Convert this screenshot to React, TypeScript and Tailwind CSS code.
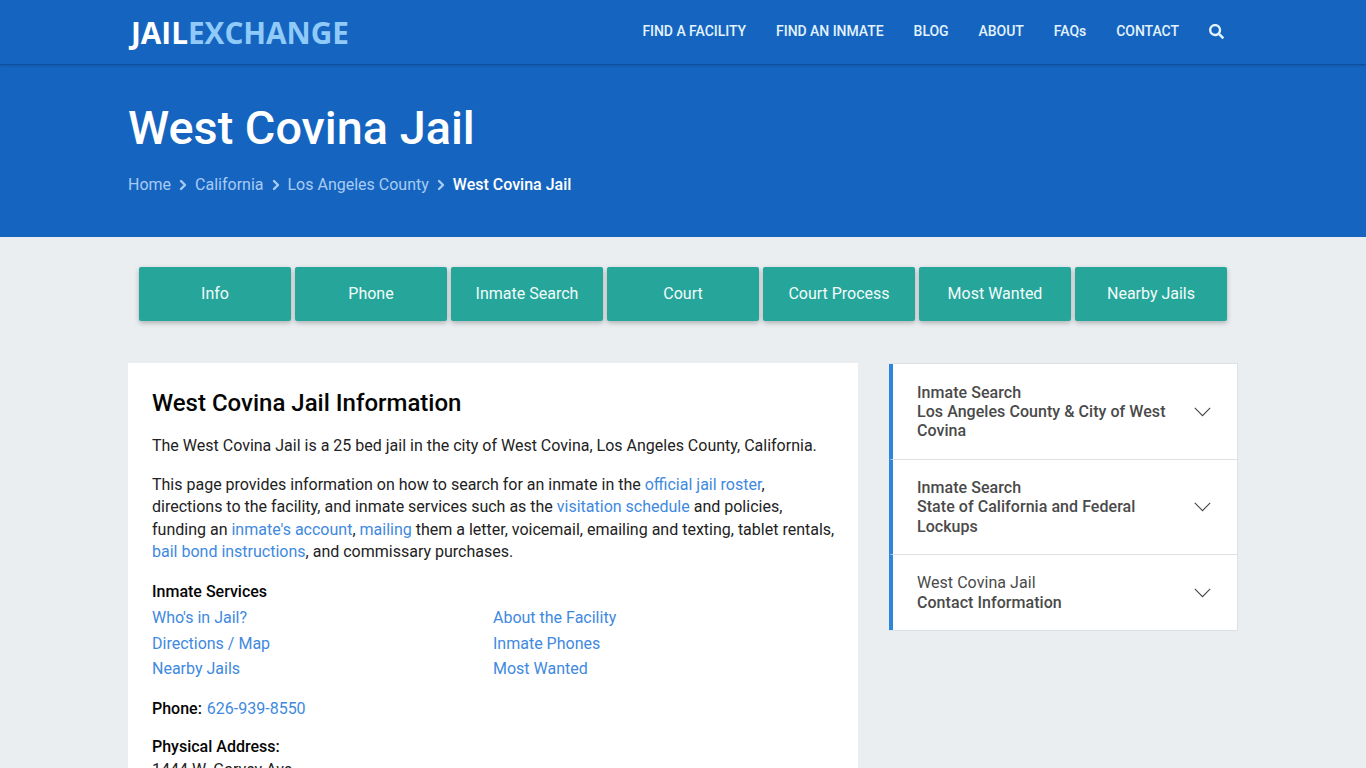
import { ChevronRight } from "lucide-react";

const navItems = [
  "FIND A FACILITY",
  "FIND AN INMATE",
  "BLOG",
  "ABOUT",
  "FAQs",
  "CONTACT",
];

const tabs = [
  "Info",
  "Phone",
  "Inmate Search",
  "Court",
  "Court Process",
  "Most Wanted",
  "Nearby Jails",
];

function Crumb({ label }: { label: string }) {
  return (
    <>
      <a className="text-[#a8cbf3]">{label}</a>
      <ChevronRight size={16} strokeWidth={3.6} className="mx-[4px] text-[#a8cbf3]" />
    </>
  );
}

function Link({ children }: { children: React.ReactNode }) {
  return <a className="text-[#4089e0]">{children}</a>;
}

function SideItem({
  first,
  second,
  third,
  light,
  className,
}: {
  first: string;
  second: string;
  third?: string;
  light?: boolean;
  className: string;
}) {
  return (
    <div className={`flex items-center border-l-4 border-l-[#2d86dc] pl-[24px] pr-[26px] ${className}`}>
      <div className="w-[258px] text-[16px] leading-[19.2px] tracking-[0.05px] text-[#4a4a4a] font-medium">
        <div className={light ? "font-normal" : ""}>{first}</div>
        <div>{second}</div>
        {third && <div>{third}</div>}
      </div>
      <svg viewBox="0 0 17 10" className="ml-auto w-[17px] h-[10px] fill-none stroke-[#444] stroke-[1.1]">
        <path d="M.8.8l7.7 7.8L16.2.8" />
      </svg>
    </div>
  );
}

export default function App() {
  return (
    <div className="h-screen overflow-hidden bg-[#eaeef1] font-['Roboto',sans-serif] text-[16px] text-[#222]">
      {/* HEADER */}
      <header className="h-[65px] bg-[#1565c0] border-b border-[#0f4f9e] shadow-[0_1px_2px_rgba(0,0,0,0.15)] relative">
        <div className="w-[1110px] mx-auto flex items-center h-[64px]">
          <div className="font-['Open_Sans',sans-serif] font-bold text-[29.8px] tracking-[-0.05px] text-white leading-none ml-[3px] mt-[2px]">
            JAIL<span className="text-[#90caf9]">EXCHANGE</span>
          </div>
          <nav className="ml-auto flex items-center gap-[30px] text-[14px] tracking-[-0.04px] font-medium text-[#e3f2fd] mr-[14px] mt-[-2px]">
            {navItems.map((item) => (
              <a key={item}>{item}</a>
            ))}
            <svg viewBox="0 0 512 512" className="w-[15px] h-[15px] fill-[#e3f2fd]">
              <path d="M505 442.7L405.3 343c-4.5-4.5-10.6-7-17-7H372c27.6-35.3 44-79.7 44-128C416 93.1 322.9 0 208 0S0 93.1 0 208s93.1 208 208 208c48.3 0 92.7-16.4 128-44v16.3c0 6.4 2.5 12.5 7 17l99.7 99.7c9.4 9.4 24.6 9.4 33.9 0l28.3-28.3c9.4-9.4 9.4-24.6.1-34zM208 336c-70.7 0-128-57.2-128-128 0-70.7 57.2-128 128-128 70.7 0 128 57.2 128 128 0 70.7-57.2 128-128 128z" />
            </svg>
          </nav>
        </div>
      </header>

      {/* HERO */}
      <section className="h-[172px] bg-[#1565c0]">
        <div className="w-[1110px] mx-auto">
          <h1 className="pt-[33px] text-[46.8px] leading-[60px] font-medium text-white">West Covina Jail</h1>
          <div className="mt-[15px] flex items-center leading-[24px]">
            <Crumb label="Home" />
            <Crumb label="California" />
            <Crumb label="Los Angeles County" />
            <span className="text-white font-medium">West Covina Jail</span>
          </div>
        </div>
      </section>

      {/* TABS */}
      <div className="mt-[30px] flex justify-center gap-[4px]">
        {tabs.map((tab) => (
          <a
            key={tab}
            className="w-[152px] h-[54px] flex items-center justify-center rounded-[2px] bg-[#26a69a] text-[#f2fbfa] shadow-[0_2px_5px_rgba(0,0,0,0.26)]"
          >
            {tab}
          </a>
        ))}
      </div>

      {/* MAIN */}
      <div className="w-[1110px] mx-auto mt-[42px] flex items-start">
        <main className="w-[730px] bg-white pl-[24px] pr-[22px] pt-[25px] pb-[24px] leading-[22.5px] shrink-0">
          <h2 className="text-[24px] leading-[30px] font-medium text-[#050505]">West Covina Jail Information</h2>
          <p className="mt-[17px]">
            The West Covina Jail is a 25 bed jail in the city of West Covina, Los Angeles County, California.
          </p>
          <p className="mt-[16px]">
            This page provides information on how to search for an inmate in the <Link>official jail roster</Link>,
            directions to the facility, and inmate services such as the <Link>visitation schedule</Link> and policies,
            funding an <Link>inmate's account</Link>, <Link>mailing</Link> them a letter, voicemail, emailing and
            texting, tablet rentals, <Link>bail bond instructions</Link>, and commissary purchases.
          </p>
          <div className="mt-[17px] font-medium text-[#050505]">Inmate Services</div>
          <div className="mt-[4px] grid grid-cols-[341px_341px] gap-y-[3px]">
            <Link>Who's in Jail?</Link>
            <Link>About the Facility</Link>
            <Link>Directions / Map</Link>
            <Link>Inmate Phones</Link>
            <Link>Nearby Jails</Link>
            <Link>Most Wanted</Link>
          </div>
          <div className="mt-[17px]">
            <span className="font-medium text-[#050505] mr-[1px]">Phone:</span> <Link>626-939-8550</Link>
          </div>
          <div className="mt-[16px] font-medium text-[#050505]">Physical Address:</div>
          <div>1444 W. Garvey Ave</div>
        </main>

        <aside className="ml-[31px] w-[349px] bg-white border border-[#dde1e5] border-l-0">
          <SideItem
            first="Inmate Search"
            second="Los Angeles County & City of West"
            third="Covina"
            className="h-[96px] border-b border-b-[#dde1e5]"
          />
          <SideItem
            first="Inmate Search"
            second="State of California and Federal"
            third="Lockups"
            className="h-[95px] border-b border-b-[#dde1e5]"
          />
          <SideItem first="West Covina Jail" second="Contact Information" light className="h-[75px]" />
        </aside>
      </div>
    </div>
  );
}
